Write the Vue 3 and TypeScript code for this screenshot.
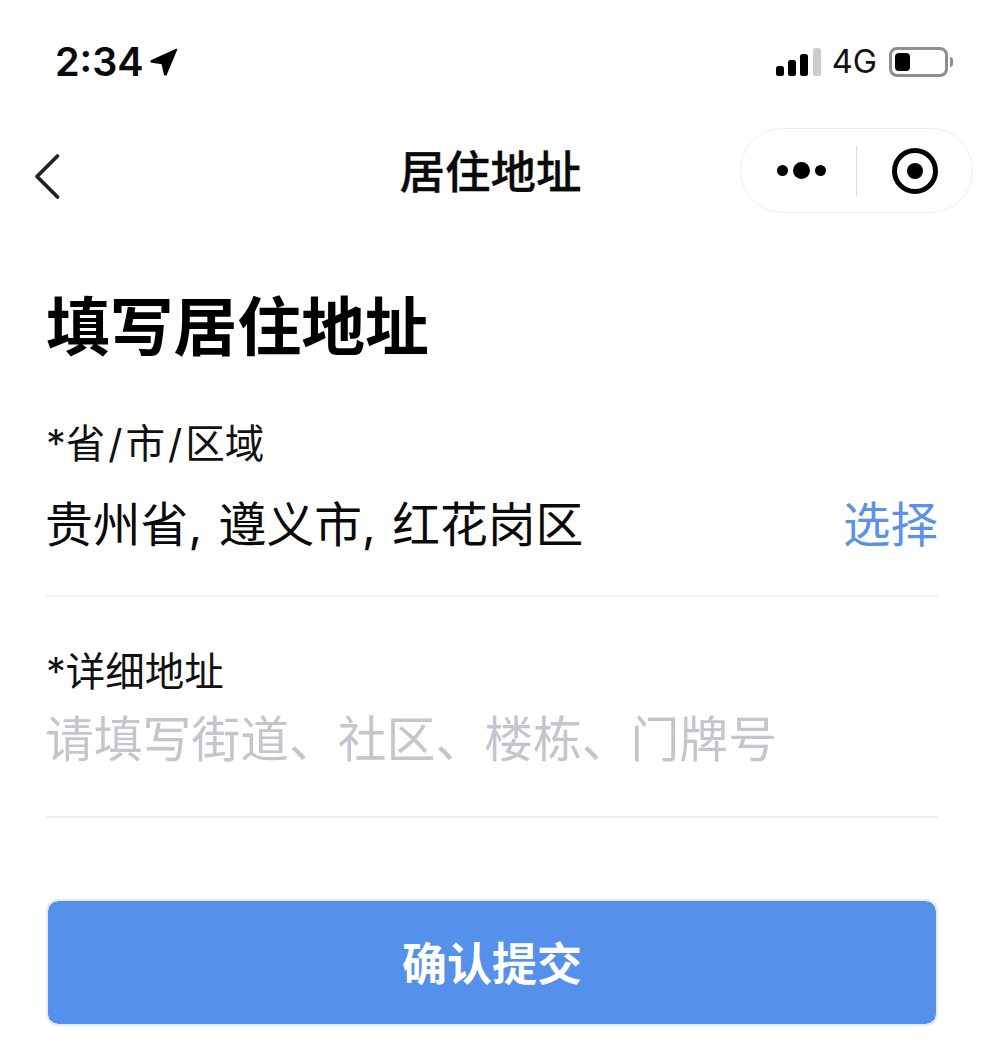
<script setup lang="ts">
const bars: number[] = [10, 16, 22, 28]
</script>

<template>
  <div class="page">
    <header class="status">
      <div class="time-wrap">
        <span class="time">2:34</span>
        <svg class="loc" viewBox="0 0 28 28" width="28" height="28"><path d="M26.5 1.5 L1.5 12.6 Q0.6 13.3 1.8 14 L12.2 15.6 L14.6 26.3 Q15.4 27.4 16.2 26.3 Z" fill="#000" stroke="#000" stroke-width="1.5" stroke-linejoin="round"/></svg>
      </div>
      <div class="status-right">
        <div class="signal">
          <i v-for="(h, i) in bars" :key="i" :class="{ off: i === 3 }" :style="{ height: h + 'px' }"></i>
        </div>
        <span class="net">4G</span>
        <div class="battery"><div class="battery-body"><div class="battery-fill"></div></div><div class="battery-cap"></div></div>
      </div>
    </header>

    <nav class="nav">
      <svg class="back" viewBox="0 0 30 50" width="30" height="50"><path d="M25.5 3 L5 23.5 L25.5 44" fill="none" stroke="#222" stroke-width="3.8" stroke-linecap="round" stroke-linejoin="round"/></svg>
      <h2 class="nav-title">居住地址</h2>
      <div class="capsule">
        <div class="dots"><i></i><i class="big"></i><i></i></div>
        <div class="sep"></div>
        <div class="target"><i></i></div>
      </div>
    </nav>

    <main class="content">
      <h1 class="heading">填写居住地址</h1>
      <section class="field first">
        <label class="label">*省<span class="slash">/</span>市<span class="slash">/</span>区域</label>
        <div class="row">
          <span class="value">贵州省, 遵义市, 红花岗区</span>
          <span class="pick">选择</span>
        </div>
      </section>
      <section class="field second">
        <label class="label">*详细地址</label>
        <div class="placeholder">请填写街道、社区、楼栋、门牌号</div>
      </section>
      <button class="submit">确认提交</button>
    </main>
  </div>
</template>

<style>
html, body { margin: 0; background: #fff; }
</style>

<style scoped>
.page {
  width: 991px;
  height: 1060px;
  overflow: hidden;
  background: #fff;
  color: #000;
  font-family: "Inter", "Noto Sans CJK SC", sans-serif;
}
.status {
  height: 124px;
  box-sizing: border-box;
  padding: 39px 38px 0 55px;
  display: flex;
  justify-content: space-between;
  align-items: flex-start;
}
.time-wrap { display: flex; align-items: center; gap: 6px; height: 46px; }
.time { font-size: 39.5px; font-weight: 600; line-height: 46px; color: #0a0a0a; }
.status-right { display: flex; align-items: center; height: 46px; }
.signal { display: flex; align-items: flex-end; gap: 4.4px; height: 28px; margin-right: -1px; }
.signal i { display: block; width: 8px; background: #000; border-radius: 2.5px; }
.signal i.off { background: #ccc; }
.net { font-size: 32.5px; margin-left: 12px; line-height: 46px; color: #111; }
.battery { display: flex; align-items: center; margin-left: 12px; }
.battery-body { width: 59px; height: 30px; box-sizing: border-box; border: 3px solid #8e8e8e; border-radius: 8px; padding: 3px; }
.battery-fill { width: 15px; height: 100%; background: #000; border-radius: 4px; }
.battery-cap { width: 3px; height: 10px; margin-left: 2px; background: #8e8e8e; border-radius: 0 4px 4px 0; }
.nav {
  position: relative;
  height: 90px;
  box-sizing: border-box;
  display: flex;
  align-items: center;
  justify-content: center;
  padding-right: 10px;
  margin-top: 3px;
}
.back { position: absolute; left: 32px; top: 26px; }
.nav-title { margin: 0; font-size: 45.5px; font-weight: 500; line-height: 56px; color: #0a0a0a; -webkit-text-stroke: 0.3px #0a0a0a; position: relative; top: 1px; }
.capsule {
  position: absolute;
  right: 18px;
  top: 1px;
  width: 233px;
  height: 85px;
  box-sizing: border-box;
  border: 1px solid #eee;
  border-radius: 43px;
  display: flex;
  align-items: center;
  padding: 0 0 0 36px;
}
.dots { display: flex; align-items: center; gap: 5px; }
.dots i { display: block; width: 11px; height: 11px; border-radius: 50%; background: #000; }
.dots i.big { width: 17px; height: 17px; }
.sep { width: 1px; height: 50px; background: #ddd; margin-left: 30px; }
.target {
  width: 46px; height: 46px; box-sizing: border-box;
  border: 5.5px solid #000; border-radius: 50%;
  display: flex; align-items: center; justify-content: center;
  margin-left: 35px;
}
.target i { display: block; width: 16px; height: 16px; border-radius: 50%; background: #000; }
.content { padding: 0 53px 0 46px; }
.heading { margin: 70px 0 0; font-size: 63.8px; font-weight: 700; line-height: 80px; color: #000; }
.field { border-bottom: 2px solid #f0f0f0; }
.field.first { margin-top: 52px; height: 178px; box-sizing: border-box; }
.field.second { margin-top: 50px; height: 171px; box-sizing: border-box; }
.label { display: block; font-size: 39.5px; line-height: 50px; color: #111; }
.slash { padding: 0 3px; }
.row { display: flex; justify-content: space-between; align-items: center; margin-top: 25px; }
.value { font-size: 47.8px; word-spacing: 3px; line-height: 62px; color: #0a0a0a; margin-left: -1px; }
.pick { font-size: 47.5px; line-height: 62px; color: #5a92e8; }
.placeholder { font-size: 48.8px; line-height: 62px; color: #c3c6cc; margin: 12px 0 0 -1px; }
.submit {
  display: block;
  width: 892px;
  height: 127px;
  margin: 81px 0 0;
  border: 2px solid #e6ebf3;
  border-radius: 12px;
  background: #5590ea;
  background-clip: padding-box;
  color: #fff;
  font: 700 45px/1 "Inter", "Noto Sans CJK SC", sans-serif;
  padding: 3px 0 0;
}
</style>
